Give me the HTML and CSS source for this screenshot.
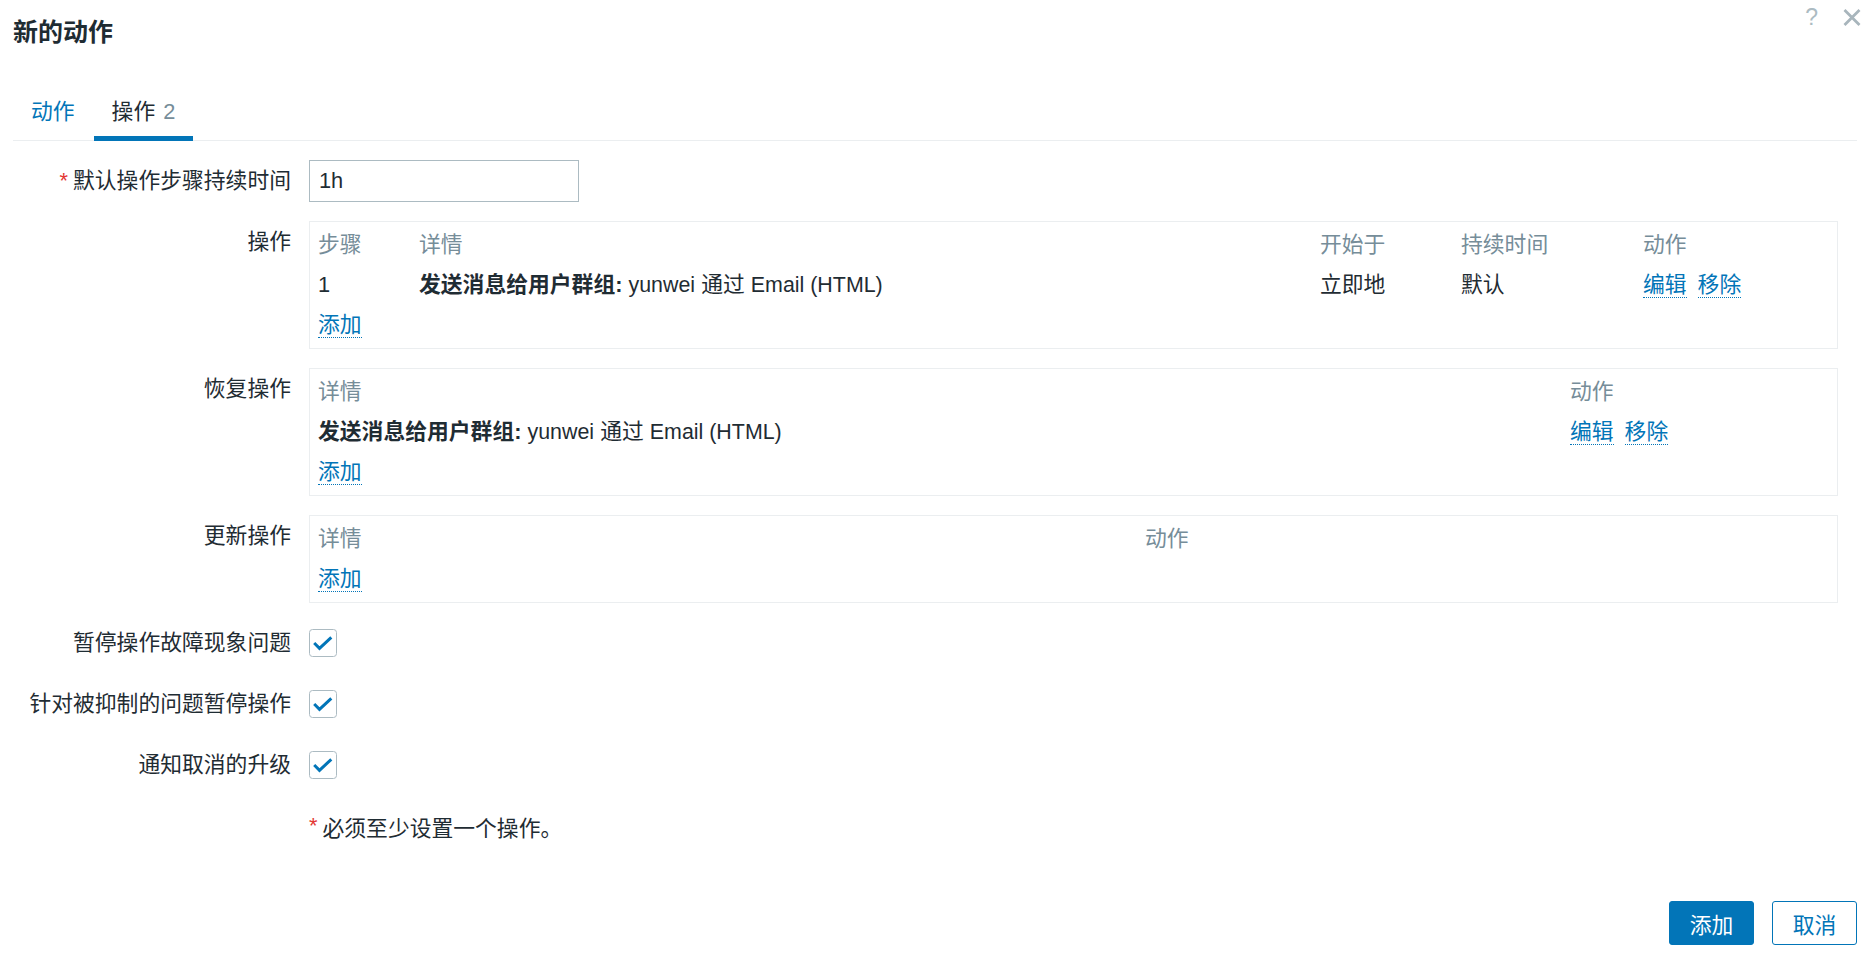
FILE: index.html
```html
<!DOCTYPE html>
<html lang="zh-CN">
<head>
<meta charset="utf-8">
<title>新的动作</title>
<link rel="stylesheet" href="styles.css">
</head>
<body>
<div class="dialog">
  <div class="head">
    <h4 class="title">新的动作</h4>
    <div class="head-btns">
      <span class="help">?</span>
      <span class="close"><svg width="18" height="17" viewBox="0 0 18 17"><path d="M1.5 1 L16.5 16 M16.5 1 L1.5 16" stroke="#a8b5bc" stroke-width="2.8" fill="none"/></svg></span>
    </div>
  </div>

  <div class="tabs">
    <a class="tab">动作</a>
    <a class="tab active">操作 <span class="count">2</span></a>
  </div>

  <div class="form">
    <label class="lbl"><span class="req">*</span>默认操作步骤持续时间</label>
    <div class="field"><input class="text-input" type="text" value="1h"></div>

    <label class="lbl">操作</label>
    <div class="box">
      <div class="grid ops">
        <div class="th">步骤</div><div class="th">详情</div><div class="th">开始于</div><div class="th">持续时间</div><div class="th">动作</div>
        <div>1</div><div><b>发送消息给用户群组:</b> <span class="latin">yunwei</span> 通过 <span class="latin">Email (HTML)</span></div><div>立即地</div><div>默认</div><div class="acts"><a class="link">编辑</a><a class="link">移除</a></div>
        <div class="full"><a class="link">添加</a></div>
      </div>
    </div>

    <label class="lbl">恢复操作</label>
    <div class="box">
      <div class="grid rec">
        <div class="th">详情</div><div class="th">动作</div>
        <div><b>发送消息给用户群组:</b> <span class="latin">yunwei</span> 通过 <span class="latin">Email (HTML)</span></div><div class="acts"><a class="link">编辑</a><a class="link">移除</a></div>
        <div class="full"><a class="link">添加</a></div>
      </div>
    </div>

    <label class="lbl">更新操作</label>
    <div class="box">
      <div class="grid upd">
        <div class="th">详情</div><div class="th">动作</div>
        <div class="full"><a class="link">添加</a></div>
      </div>
    </div>

    <label class="lbl">暂停操作故障现象问题</label>
    <div class="field"><span class="cb"><svg width="28" height="28" viewBox="0 0 28 28"><rect x="0.5" y="0.5" width="27" height="27" rx="3" fill="#fff" stroke="#acbbc2"/><path d="M5.2 14 L10.5 19.3 L22.3 8.3" stroke="#0275b8" stroke-width="3" fill="none"/></svg></span></div>

    <label class="lbl">针对被抑制的问题暂停操作</label>
    <div class="field"><span class="cb"><svg width="28" height="28" viewBox="0 0 28 28"><rect x="0.5" y="0.5" width="27" height="27" rx="3" fill="#fff" stroke="#acbbc2"/><path d="M5.2 14 L10.5 19.3 L22.3 8.3" stroke="#0275b8" stroke-width="3" fill="none"/></svg></span></div>

    <label class="lbl">通知取消的升级</label>
    <div class="field"><span class="cb"><svg width="28" height="28" viewBox="0 0 28 28"><rect x="0.5" y="0.5" width="27" height="27" rx="3" fill="#fff" stroke="#acbbc2"/><path d="M5.2 14 L10.5 19.3 L22.3 8.3" stroke="#0275b8" stroke-width="3" fill="none"/></svg></span></div>

    <div class="lbl"></div>
    <div class="field note"><span class="req">*</span>必须至少设置一个操作。</div>
  </div>

  <div class="footer">
    <button class="btn primary">添加</button>
    <button class="btn secondary">取消</button>
  </div>
</div>
</body>
</html>
```

FILE: styles.css
```css
* { box-sizing: border-box; }
html, body { margin: 0; padding: 0; background: #fff; }
body {
  font-family: "Liberation Sans", Arial, "Noto Sans CJK SC", sans-serif;
  font-size: 21.8px;
  color: #1f2c33;
}
.dialog {
  padding: 0 18px 0 13px;
}
.head {
  display: flex;
  justify-content: space-between;
  align-items: flex-start;
  height: 46px;
}
.title {
  margin: 17px 0 0;
  font-size: 25px;
  line-height: 30px;
  font-weight: bold;
  color: #1f2c33;
}
.head-btns {
  display: flex;
  align-items: center;
  gap: 25px;
  margin-top: 5px;
  margin-right: -4px;
}
.help {
  font-size: 23px;
  line-height: 24px;
  color: #acbbc2;
}
.close { display: flex; }
.tabs {
  display: flex;
  gap: 1px;
  margin-top: 42px;
  border-bottom: 1px solid #ebeef0;
}
.tab {
  padding: 9px 18px 9px;
  line-height: 30px;
  color: #0275b8;
  border-bottom: 5px solid transparent;
  margin-bottom: -1px;
}
.tab.active {
  color: #1f2c33;
  border-bottom-color: #0275b8;
}
.count { color: #768d99; margin-left: 2px; }
.form {
  display: grid;
  grid-template-columns: 278px 1fr;
  column-gap: 18px;
  row-gap: 19px;
  padding: 19px 19px 0 0;
}
.lbl {
  text-align: right;
  line-height: 42px;
  white-space: nowrap;
}
.req {
  color: #e33734;
  margin-right: 5px;
}
.field {
  min-height: 42px;
  display: flex;
  align-items: center;
}
.text-input {
  width: 270px;
  height: 42px;
  border: 1px solid #acbbc2;
  padding: 0 9px;
  font: inherit;
  color: #1f2c33;
  outline: none;
}
.cb { display: flex; }
.box {
  border: 1px solid #ebeef0;
  padding: 3px 8px;
}
.grid {
  display: grid;
  line-height: 40px;
}
.grid > div { white-space: nowrap; min-height: 40px; }
.latin { font-size: 21.4px; }
.ops { grid-template-columns: 101px 901px 141px 182px 1fr; }
.rec { grid-template-columns: 1252px 1fr; }
.upd { grid-template-columns: 827px 1fr; }
.full { grid-column: 1 / -1; }
.th { color: #768d99; }
.acts a + a { margin-left: 11px; }
.link {
  color: #0275b8;
  text-decoration: none;
  border-bottom: 1px dotted #0275b8;
}
b { font-weight: bold; }
.note { white-space: nowrap; }
.footer {
  display: flex;
  justify-content: flex-end;
  gap: 18px;
  margin-top: 54px;
}
.btn {
  font: inherit;
  height: 44px;
  width: 85px;
  border-radius: 3px;
  cursor: pointer;
}
.primary {
  background: #0275b8;
  color: #fff;
  border: 1px solid #0275b8;
}
.secondary {
  background: #fff;
  color: #0275b8;
  border: 1px solid #0275b8;
}
```
